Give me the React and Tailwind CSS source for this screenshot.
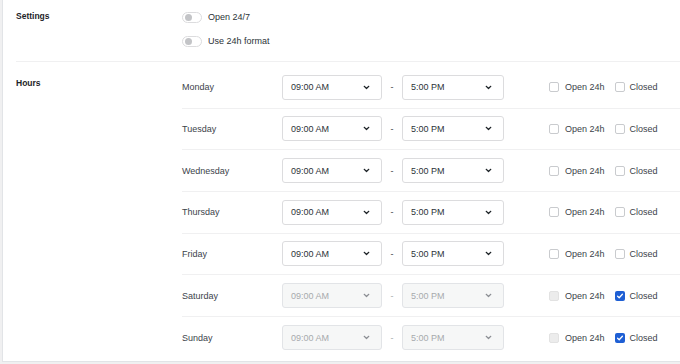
import React from "react";

const DAYS = [
  { name: "Monday", closed: false },
  { name: "Tuesday", closed: false },
  { name: "Wednesday", closed: false },
  { name: "Thursday", closed: false },
  { name: "Friday", closed: false },
  { name: "Saturday", closed: true },
  { name: "Sunday", closed: true },
];

function Chevron({ muted }) {
  return (
    <svg width="7" height="5" viewBox="0 0 7 5" fill="none">
      <path
        d="M1.2 1.3 L3.5 3.5 L5.8 1.3"
        stroke={muted ? "#8c8f94" : "#1d2327"}
        strokeWidth="1.2"
        strokeLinecap="round"
        strokeLinejoin="round"
      />
    </svg>
  );
}

function TimeSelect({ value, disabled, width }) {
  return (
    <div
      className={`${width} h-[25px] flex items-center justify-between pl-[8px] pr-[11px] rounded-[3px] border ${
        disabled
          ? "bg-[#f6f7f7] border-[#e2e4e7] text-[#a7aaad]"
          : "bg-white border-[#dcdcde] text-[#2c3338]"
      }`}
    >
      <span>{value}</span>
      <Chevron muted={disabled} />
    </div>
  );
}

function Checkbox({ checked, disabled }) {
  if (checked) {
    return (
      <div className="w-[10px] h-[10px] rounded-[2px] bg-[#1e5fd4] flex items-center justify-center">
        <svg width="8" height="8" viewBox="0 0 8 8" fill="none">
          <path d="M1.6 4.2 L3.2 5.7 L6.4 2.3" stroke="#fff" strokeWidth="1.3" strokeLinecap="round" strokeLinejoin="round" />
        </svg>
      </div>
    );
  }
  return (
    <div
      className={`w-[10px] h-[10px] rounded-[2px] border ${
        disabled ? "bg-[#ececec] border-[#e2e2e2]" : "bg-white border-[#c9cbce]"
      }`}
    />
  );
}

function Toggle({ label }) {
  return (
    <div className="h-[12px] flex items-center">
      <div className="w-[20px] h-[11px] rounded-full border border-[#dcdcde] bg-white flex items-center">
        <div className="w-[7px] h-[7px] rounded-full bg-[#c3c4c7] ml-[1.5px]" />
      </div>
      <span className="ml-[6px] text-[#2c3338]">{label}</span>
    </div>
  );
}

export default function App() {
  return (
    <div
      className="w-[680px] h-[364px] overflow-hidden bg-[#f0f0f1] pl-[2px] text-[9px] leading-[12px]"
      style={{ fontFamily: '"Liberation Sans", Arial, sans-serif' }}
    >
      <div className="h-[362px] bg-white border-l border-b border-[#e2e4e7] pl-[13px] pb-[2px]">
        {/* Settings */}
        <div className="flex border-b border-[#f0f0f1] pt-[11px] pb-[14px]">
          <div className="w-[166px] font-bold text-[8.5px] text-[#1d2327] -mt-[1px]">Settings</div>
          <div className="flex flex-col gap-[12px]">
            <Toggle label="Open 24/7" />
            <Toggle label="Use 24h format" />
          </div>
        </div>

        {/* Hours */}
        <div className="flex pt-[5px]">
          <div className="w-[166px] pt-[10px] font-bold text-[8.5px] text-[#1d2327]">Hours</div>
          <div className="flex-1">
            {DAYS.map((d, i) => (
              <div
                key={d.name}
                className={`h-[41.67px] flex items-center ${
                  i < DAYS.length - 1 ? "border-b border-[#f0f0f1]" : ""
                }`}
              >
                <div className="w-[100px] text-[#3c434a]">{d.name}</div>
                <TimeSelect value="09:00 AM" disabled={d.closed} width="w-[100px]" />
                <div className={`w-[20px] text-center ${d.closed ? "text-[#a7aaad]" : "text-[#3c434a]"}`}>-</div>
                <TimeSelect value="5:00 PM" disabled={d.closed} width="w-[102px]" />
                <div className="ml-[45px] flex items-center">
                  <Checkbox disabled={d.closed} />
                  <span className="ml-[6px] text-[#3c434a]">Open 24h</span>
                </div>
                <div className="ml-[10px] flex items-center">
                  <Checkbox checked={d.closed} />
                  <span className="ml-[5px] text-[#3c434a]">Closed</span>
                </div>
              </div>
            ))}
          </div>
        </div>
      </div>
    </div>
  );
}
